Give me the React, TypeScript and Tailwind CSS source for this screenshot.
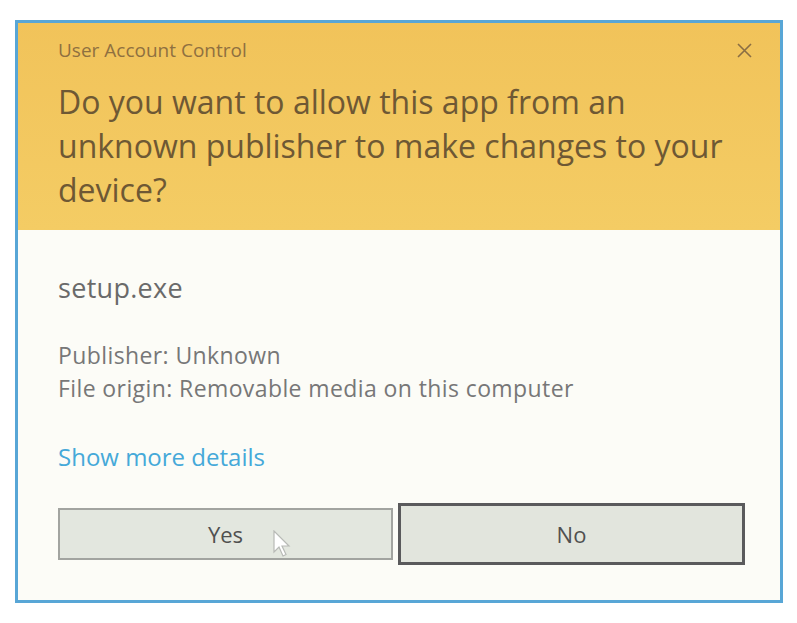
import React from "react";

export default function App() {
  return (
    <div
      className="w-[797px] h-[623px] bg-white pt-[20px] pl-[15px]"
      style={{ fontFamily: '"Open Sans", "Noto Sans", sans-serif' }}
    >
      <div className="w-[768px] h-[583px] border-[3px] border-[#58a6d6] flex flex-col bg-[#fcfcf7]">
        <div className="h-[207px] bg-gradient-to-b from-[#f1c35a] to-[#f4cc64] relative pl-[40px] pt-[14px]">
          <div className="text-[19px] leading-[26px] text-[#8f7040]">User Account Control</div>
          <div className="mt-[17px] text-[32px] leading-[44px] text-[#6e5834] w-[680px]">
            Do you want to allow this app from an unknown publisher to make changes to your device?
          </div>
          <svg
            className="absolute right-[28px] top-[20px]"
            width="15"
            height="15"
            viewBox="0 0 15 15"
          >
            <path d="M1 1 L14 14 M14 1 L1 14" stroke="#8a6e44" strokeWidth="1.6" />
          </svg>
        </div>
        <div className="flex-1 pl-[40px] pt-[42px] relative">
          <div className="text-[27px] leading-[32px] tracking-[0.3px] text-[#6a6a6a]">setup.exe</div>
          <div className="mt-[35px] text-[23px] leading-[33px] tracking-[0.4px] text-[#777777]">
            <div>Publisher: Unknown</div>
            <div>File origin: Removable media on this computer</div>
          </div>
          <div className="mt-[37px] text-[24px] leading-[30px] text-[#45a9d9]">Show more details</div>
          <div className="mt-[31px] flex items-center gap-[5px]">
            <div className="w-[335px] h-[52px] border-[2px] border-[#a2a4a0] bg-[#e3e7df] flex items-center justify-center text-[22px] text-[#505050] relative">
              Yes
              <svg
                className="absolute left-[212px] top-[20px]"
                width="20"
                height="28"
                viewBox="0 0 20 28"
              >
                <path
                  d="M2 1 L2 22 L7 17 L11 26 L14 24.5 L10 16 L17 16 Z"
                  fill="#ffffff"
                  stroke="#b8bab6"
                  strokeWidth="1.2"
                />
              </svg>
            </div>
            <div className="w-[347px] h-[62px] border-[3px] border-[#5a5a5c] bg-[#e2e5dd] flex items-center justify-center text-[22px] text-[#505050]">
              No
            </div>
          </div>
        </div>
      </div>
    </div>
  );
}
